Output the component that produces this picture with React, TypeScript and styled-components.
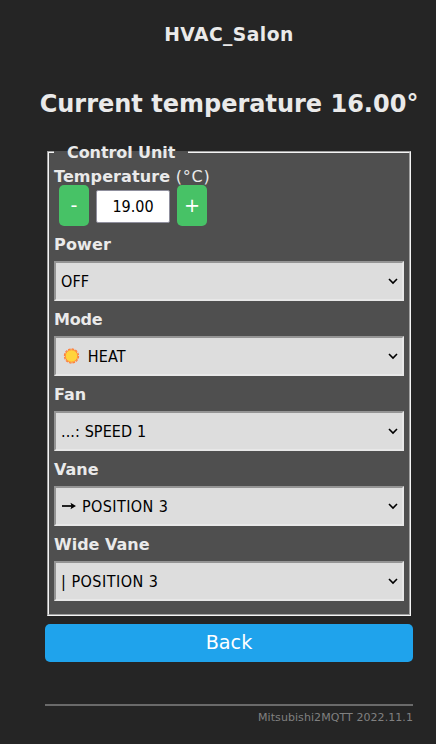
import React from "react";
import styled, { createGlobalStyle } from "styled-components";

const Global = createGlobalStyle`
  * { box-sizing: border-box; }
  body { margin: 0; background: #252525; color: #eaeaea; font-family: Verdana, "DejaVu Sans", sans-serif; font-size: 16px; }
`;

const Page = styled.main`
  width: 368px;
  height: 744px;
  margin-left: 45px;
  display: flex;
  flex-direction: column;
`;

const Text = styled.span<{ $ls?: number }>`
  white-space: pre;
  letter-spacing: ${(p) => p.$ls ?? 0}px;
`;

const Title = styled.h3`
  margin: 23px 0 0;
  height: 24px;
  line-height: 24px;
  font-size: 18.72px;
  text-align: center;
`;

const Reading = styled.h2`
  margin: 42px -20px 0;
  height: 30px;
  line-height: 30px;
  font-size: 24px;
  text-align: center;
  white-space: nowrap;
`;

const Panel = styled.fieldset`
  margin: 23px 2px 0;
  padding: 4px 5px 9px;
  border: 2px groove #f4f4f4;
  background: #4f4f4f;
  height: 474px;
`;

const Legend = styled.legend`
  width: 134px;
  height: 20px;
  padding: 0 0 0 13px;
  line-height: 22px;
  font-weight: bold;
`;

const Label = styled.label`
  display: block;
  height: 20px;
  line-height: 22px;
  font-weight: bold;
`;

const Unit = styled.span`
  font-weight: normal;
  letter-spacing: 0.8px;
`;

const Stepper = styled.div`
  display: flex;
  align-items: center;
  gap: 7px;
  height: 41px;
  margin: -1px 0 8px 5px;
`;

const StepButton = styled.button`
  width: 30px;
  height: 41px;
  padding: 0;
  border: 0;
  border-radius: 5px;
  background: #47c266;
  color: #fff;
  font: 19.2px/41px Verdana, "DejaVu Sans", sans-serif;
`;

const Value = styled.input`
  width: 74px;
  height: 33px;
  margin-top: 2px;
  border: 1px solid #8f8f9d;
  border-radius: 2px;
  padding: 0;
  background: #fff;
  color: #000;
  text-align: center;
  font: 16px "DejaVu Sans Condensed", "DejaVu Sans", sans-serif;
  font-stretch: condensed;
`;

const Field = styled.div`
  height: 75px;
`;

const Select = styled.div`
  display: flex;
  align-items: center;
  width: 350px;
  height: 40px;
  margin-top: 7px;
  padding: 0 4px 0 5px;
  border: 2px solid;
  border-color: #949494 #e7e7e7 #e7e7e7 #949494;
  background: #dddddd;
  color: #000;
  font-family: "DejaVu Sans Condensed", "DejaVu Sans", sans-serif;
  font-stretch: condensed;
`;

const Chevron = styled.svg`
  margin-left: auto;
`;

const Back = styled.button`
  height: 38px;
  flex: none;
  margin-top: 8px;
  padding: 0;
  border: 0;
  border-radius: 5px;
  background: #1fa3ec;
  color: #fff;
  font: 19.2px/38px Verdana, "DejaVu Sans", sans-serif;
`;

const Footer = styled.footer`
  margin-top: 42px;
  border-top: 2px solid;
  border-image: linear-gradient(#6a6a6a 50%, #858585 50%) 2;
  padding-top: 5px;
  line-height: 14px;
  text-align: right;
  font-size: 11px;
  letter-spacing: 0.07px;
  color: #808080;
`;

const Sun = () => (
  <svg width="22" height="18" viewBox="0 0 22 18">
    <circle cx="10.5" cy="9" r="7" fill="none" stroke="#ff7f3f" strokeWidth="1.3" strokeDasharray="2.6 1.06" />
    <circle cx="10.5" cy="9" r="6.2" fill="#ffd43c" stroke="#ff9138" strokeWidth="1" />
  </svg>
);

const Arrow = () => (
  <svg width="16" height="16" viewBox="0 0 16 16">
    <path d="M1 8H11" stroke="#222" strokeWidth="2" />
    <path d="M9.5 4.8L15 8L9.5 11.2L10.5 8Z" fill="#000" />
  </svg>
);

type Row = { label: string; value: string; ls?: number; vls?: number; icon?: React.ReactNode };
const rows: Row[] = [
  { label: "Power", value: "OFF", ls: 0.15, vls: 0.1 },
  { label: "Mode", value: " HEAT", ls: -0.2, vls: 0.15, icon: <Sun /> },
  { label: "Fan", value: "...: SPEED 1", vls: 0.1 },
  { label: "Vane", value: " POSITION 3", vls: 0.4, icon: <Arrow /> },
  { label: "Wide Vane", value: "| POSITION 3", vls: 0.48 },
];

export default function App() {
  return (
    <>
      <Global />
      <Page>
        <Title><Text $ls={0.45}>HVAC_Salon</Text></Title>
        <Reading><Text>Current temperature 16.00°</Text></Reading>
        <Panel>
          <Legend><Text $ls={-0.08}>Control Unit</Text></Legend>
          <Label><Text $ls={0.1}>Temperature</Text> <Unit>(°C)</Unit></Label>
          <Stepper>
            <StepButton>-</StepButton>
            <Value defaultValue="19.00" />
            <StepButton>+</StepButton>
          </Stepper>
          {rows.map((r) => (
            <Field key={r.label}>
              <Label><Text $ls={r.ls}>{r.label}</Text></Label>
              <Select>
                {r.icon}
                <Text $ls={r.vls}>{r.value}</Text>
                <Chevron width="10" height="8" viewBox="0 0 10 8">
                  <path d="M1 2L5 6L9 2" fill="none" stroke="#000" strokeWidth="1.6" />
                </Chevron>
              </Select>
            </Field>
          ))}
        </Panel>
        <Back>Back</Back>
        <Footer>Mitsubishi2MQTT 2022.11.1</Footer>
      </Page>
    </>
  );
}
